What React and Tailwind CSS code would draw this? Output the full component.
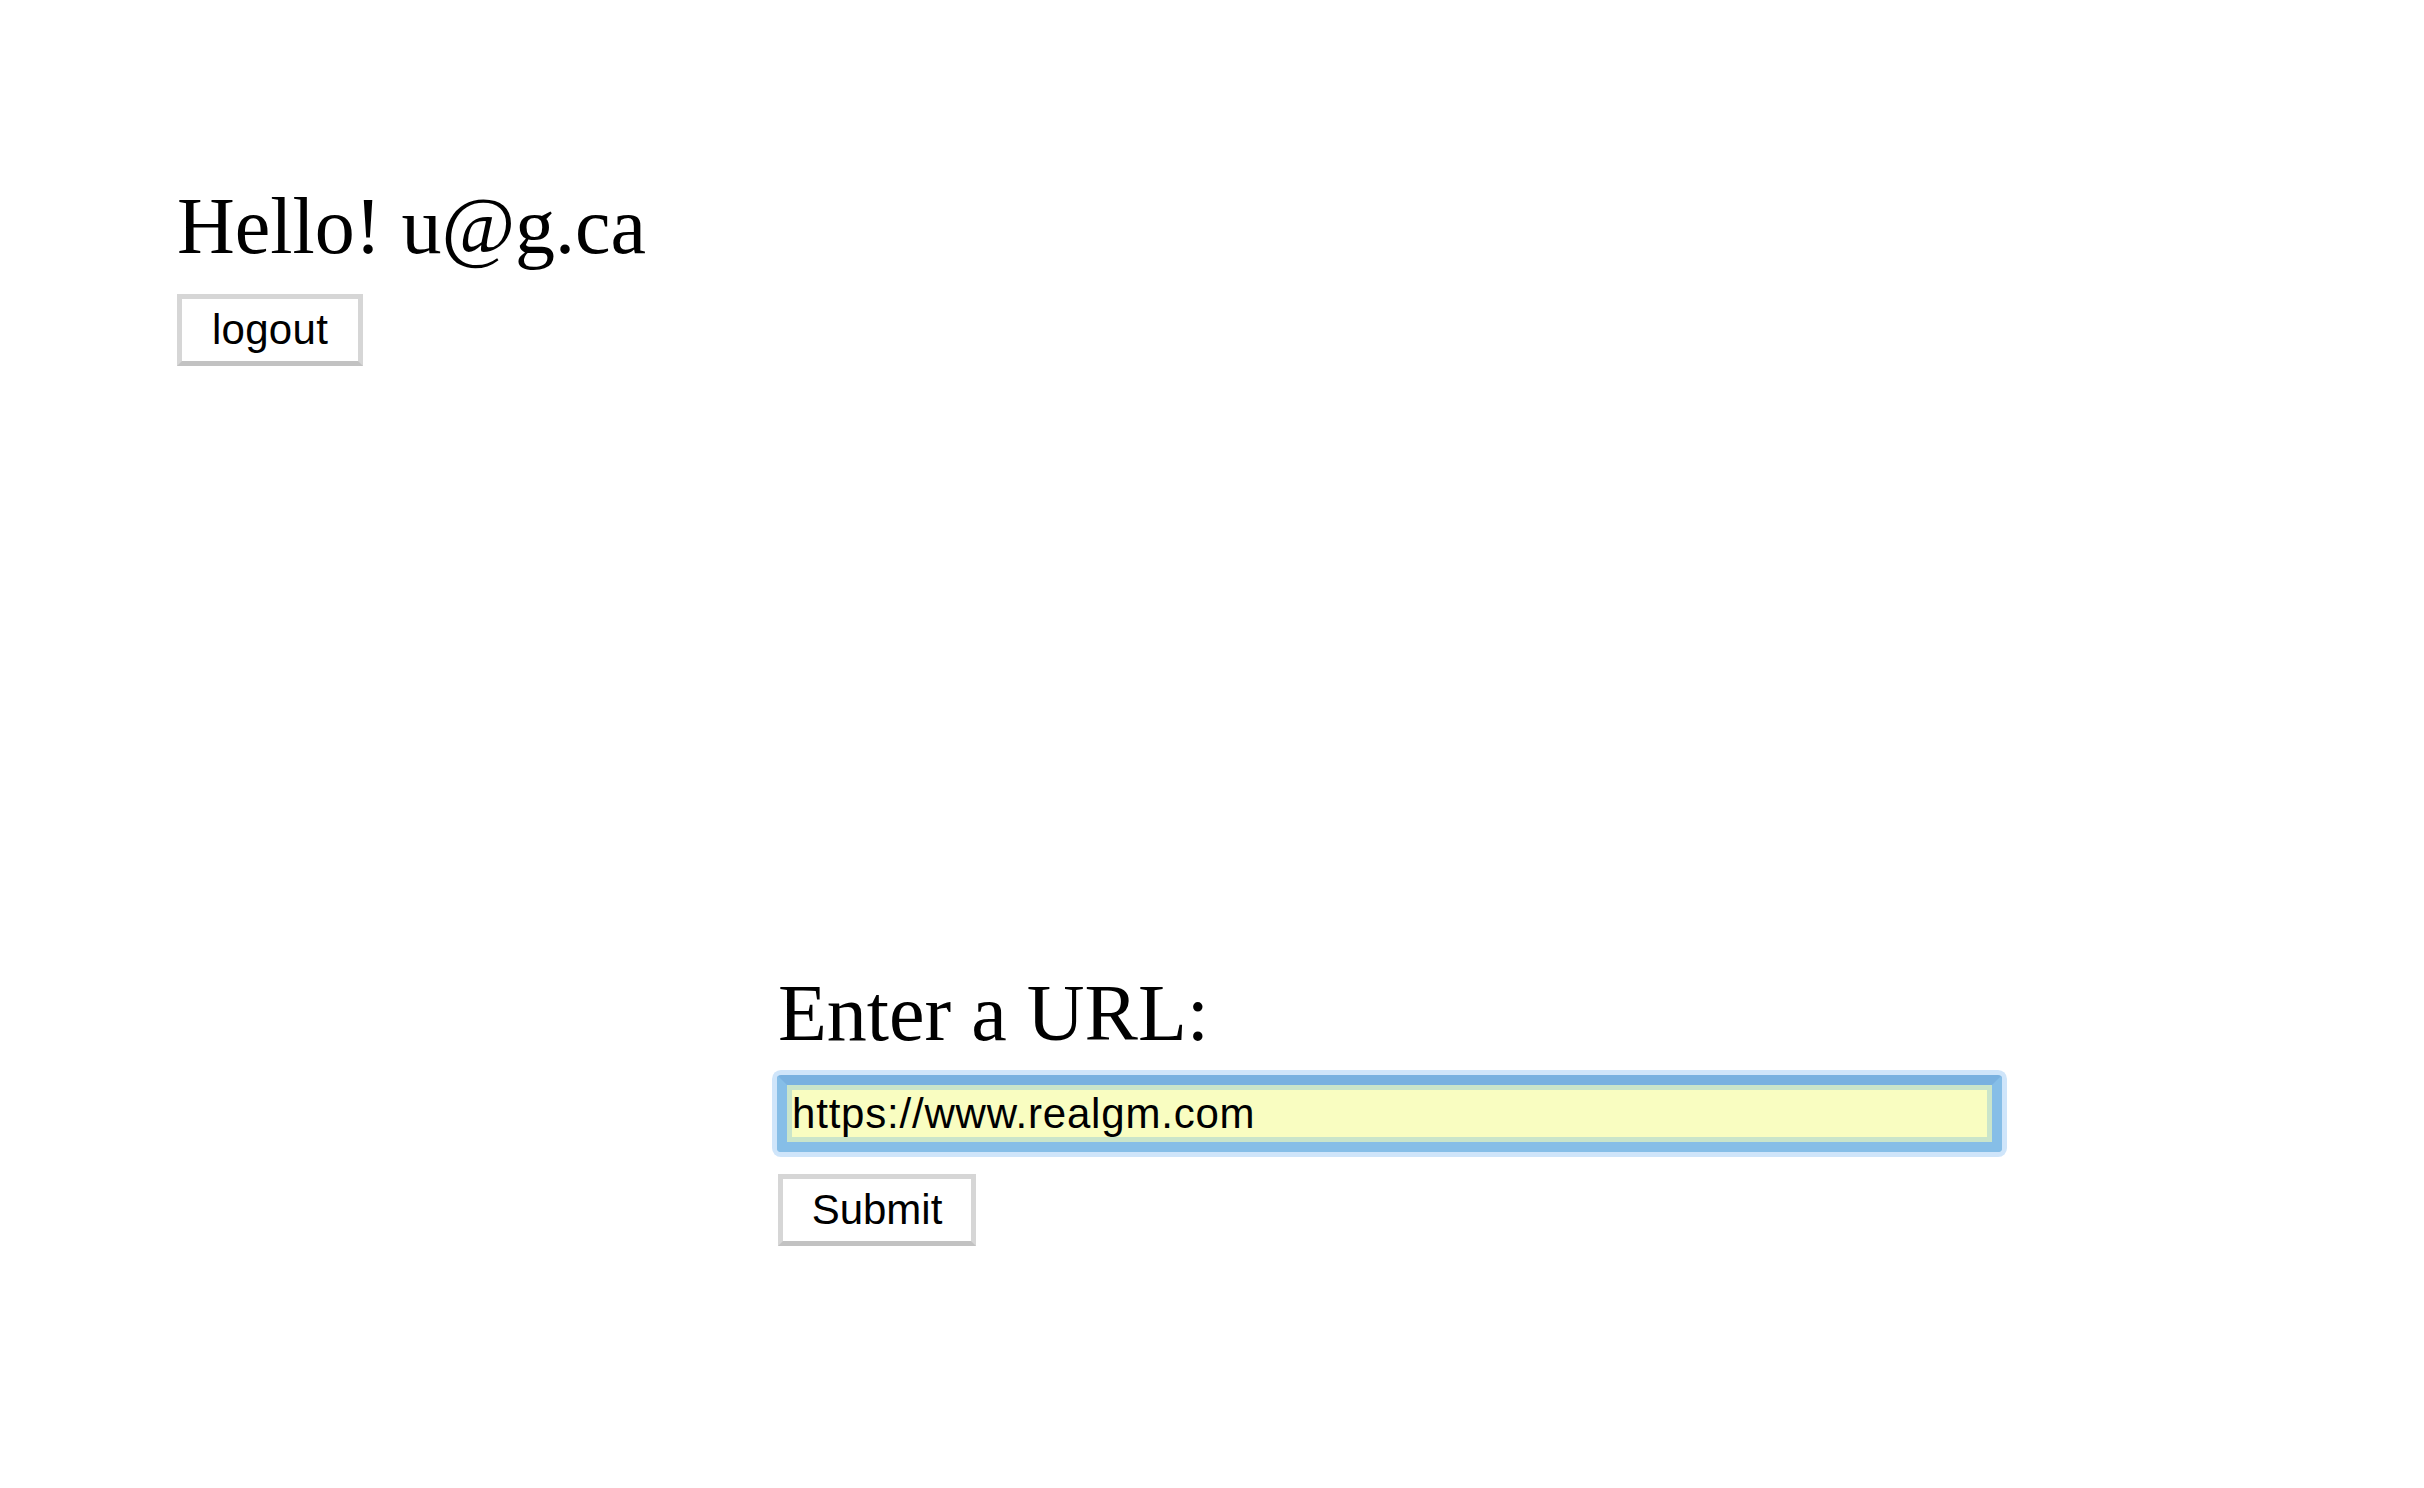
import { useState } from 'react';

export default function App() {
  const [url, setUrl] = useState('https://www.realgm.com');

  return (
    <div className="min-h-screen bg-white text-black font-['Liberation_Serif','Times_New_Roman',serif]">
      {/* Greeting */}
      <div className="pl-[177px] pt-[186px] flex flex-col items-start">
        <h1 className="text-[80px] leading-[80px] font-normal">Hello! u@g.ca</h1>
        <button
          type="button"
          className="mt-[28px] w-[186px] h-[72px] flex items-center justify-center border-[5px] border-[#d6d6d6] border-b-[#c2c2c2] bg-white text-[42px] leading-none tracking-[0.3px] font-['Liberation_Sans',Arial,sans-serif]"
        >
          logout
        </button>
      </div>

      {/* URL form */}
      <form
        className="pl-[777px] mt-[607px] flex flex-col items-start"
        onSubmit={(e) => e.preventDefault()}
      >
        <h2 className="ml-[1px] text-[80px] leading-[80px] font-normal">Enter a URL:</h2>
        <input
          type="text"
          autoFocus
          value={url}
          onChange={(e) => setUrl(e.target.value)}
          className="mt-[22px] w-[1225px] h-[77px] rounded-[4px] border-[10px] border-[#86bee7] border-t-[#79b1e0] bg-[#f9fdc1] pl-[5px] text-[42px] leading-none tracking-[0.8px] text-black caret-black outline-none font-['Liberation_Sans',Arial,sans-serif] shadow-[inset_0_0_0_5px_#cae5ca,0_0_0_5px_#cfe5fa]"
        />
        <button
          type="submit"
          className="mt-[22px] ml-[1px] w-[198px] h-[72px] flex items-center justify-center border-[5px] border-[#d6d6d6] border-b-[#c2c2c2] bg-white text-[42px] leading-none font-['Liberation_Sans',Arial,sans-serif]"
        >
          Submit
        </button>
      </form>
    </div>
  );
}
